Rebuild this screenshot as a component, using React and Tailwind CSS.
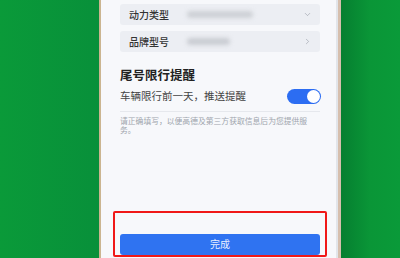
import { ChevronDown, ChevronRight } from "lucide-react";

export default function App() {
    const font = { fontFamily: '"Noto Sans CJK SC", "Noto Sans", sans-serif' };

    return (
        <div className="w-[400px] h-[258px] overflow-hidden flex bg-[#0a9637]" style={font}>
            {/* 左侧绿色背景 */}
            <div className="w-[99px] shrink-0 bg-gradient-to-r from-[#0a9a39] to-[#08903a]"></div>

            {/* 手机边框 */}
            <div className="w-[242px] shrink-0 flex border-l-2 border-[#cbb590] border-r-[3px] border-r-[#d6bfae]">
                <div className="flex-1 flex flex-col bg-[#f7f8fb] border-r-2 border-[#e2e5ea]">
                    <div className="pl-[19px] pr-[15px] pt-[4px]">
                        <div className="h-[21px] rounded-[3px] bg-[#eceef3] flex items-center pl-[9px] pr-[8px] w-[200px]">
                            <span className="w-[58px] text-[10px] font-medium text-[#333] leading-none">动力类型</span>
                            <div className="w-[66px] h-[7px] rounded-full bg-[#cdd0d5] blur-[2px]"></div>
                            <ChevronDown className="ml-auto text-[#9095a0]" size={9} strokeWidth={1.5} />
                        </div>
                        <div className="mt-[6px] h-[21px] rounded-[3px] bg-[#eceef3] flex items-center pl-[9px] pr-[8px] w-[200px]">
                            <span className="w-[58px] text-[10px] font-medium text-[#333] leading-none">品牌型号</span>
                            <div className="w-[43px] h-[7px] rounded-full bg-[#c9ccd2] blur-[2px]"></div>
                            <ChevronRight className="ml-auto text-[#9095a0]" size={9} strokeWidth={1.5} />
                        </div>

                        <h3 className="mt-[15px] h-[16px] leading-[16px] text-[12.5px] font-bold text-[#222]">尾号限行提醒</h3>

                        <div className="mt-[5px] h-[16px] w-[201px] flex items-center justify-between">
                            <span className="text-[10.5px] text-[#444] leading-none">车辆限行前一天，推送提醒</span>
                            <div className="w-[34px] h-[15px] rounded-full bg-[#2c6df2] flex items-center justify-end pr-[1px]">
                                <div className="w-[13px] h-[13px] rounded-full bg-white"></div>
                            </div>
                        </div>

                        <div className="mt-[7px] h-px w-[200px] bg-[#e6e8ed]"></div>

                        <p className="mt-[4px] w-[195px] text-[7.8px] leading-[9px] text-[#a0a5ad]">
                            请正确填写，以便高德及第三方获取信息后为您提供服务。
                        </p>
                    </div>

                    {/* 完成按钮 (红框标注) */}
                    <div className="mt-auto mb-[1px] ml-[12px] w-[214px] h-[46px] border-2 border-[#f01818] rounded-[2px] px-[5px] pt-[16px]">
                        <button className="w-[200px] h-[21px] rounded-[3px] bg-[#2f73f1] text-[#e8efff] text-[10px] leading-none">
                            完成
                        </button>
                    </div>
                </div>
            </div>

            {/* 右侧绿色背景 */}
            <div className="flex-1 bg-gradient-to-r from-[#067f30] via-[#0a9637] to-[#0a9a39]"></div>
        </div>
    );
}
